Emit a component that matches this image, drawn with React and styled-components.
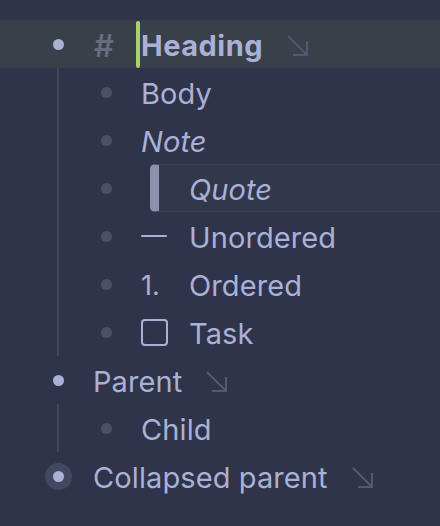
import React from "react";
import styled, { createGlobalStyle, css } from "styled-components";

const GlobalStyle = createGlobalStyle`
  html, body {
    margin: 0;
    padding: 0;
    background: #30344a;
  }
  body {
    font-family: Inter, "Noto Sans", sans-serif;
    color: #a9b1d6;
    -webkit-font-smoothing: antialiased;
  }
`;

const Outline = styled.div`
  width: 440px;
  height: 526px;
  overflow: hidden;
  padding-top: 20px;
  box-sizing: border-box;
  background: #30344a;
`;

const Row = styled.div`
  position: relative;
  display: flex;
  align-items: center;
  height: 48px;
  padding-left: ${(p) => 40 + p.level * 48}px;
  font-size: 29px;
  letter-spacing: 0.1px;
  ${(p) =>
    p.active &&
    css`
      background: #3a4049;
    `}
`;

const BulletCell = styled.div`
  width: 36px;
  flex: none;
  display: flex;
  align-items: center;
  justify-content: center;
  margin-right: 17px;
`;

const Dot = styled.span`
  position: relative;
  width: 11px;
  height: 11px;
  border-radius: 50%;
  background: ${(p) => (p.dim ? "#4a5068" : "#a9b1d6")};
  ${(p) =>
    p.collapsed &&
    css`
      box-shadow: 0 0 0 8px rgba(169, 177, 214, 0.16);
    `}
`;

const Prefix = styled.div`
  width: 48px;
  flex: none;
  display: flex;
  align-items: center;
  height: 100%;
  box-sizing: border-box;
`;

const Hash = styled.span`
  color: #676d80;
  font-size: 31px;
  font-weight: 600;
  margin-left: 1px;
  padding-top: 3px;
`;

const Caret = styled.span`
  width: 4px;
  height: 47px;
  background: #a9d46c;
  border-radius: 2px;
  margin-left: -5px;
  margin-right: 1px;
  flex: none;
`;

const Text = styled.span`
  font-weight: ${(p) => (p.bold ? 700 : 400)};
  font-style: ${(p) => (p.italic ? "italic" : "normal")};
  letter-spacing: ${(p) => (p.bold ? "0.5px" : "0.1px")};
  white-space: nowrap;
  padding-top: 3px;
`;

const Dash = styled.span`
  width: 26px;
  height: 2.5px;
  background: #a9b1d6;
  border-radius: 1px;
`;

const Num = styled.span`
  font-size: 27px;
  padding-top: 3px;
`;

const Box = styled.span`
  width: 27px;
  height: 27px;
  box-sizing: border-box;
  border: 2px solid #a9b1d6;
  border-radius: 4px;
`;

const QuoteBlock = styled.div`
  flex: 1;
  align-self: stretch;
  display: flex;
  align-items: center;
  margin-left: 9px;
  background: rgba(255, 255, 255, 0.015);
  border-top: 1px solid rgba(255, 255, 255, 0.05);
  border-bottom: 1px solid rgba(255, 255, 255, 0.05);
  border-left: 9px solid #8c92ad;
  border-radius: 5px 0 0 5px;
  padding-left: 30px;
`;

const Guide = styled.div`
  position: relative;
  &::before {
    content: "";
    position: absolute;
    left: 57px;
    top: 0;
    bottom: 0;
    width: 1.5px;
    background: #434860;
  }
`;

const Jump = styled.svg`
  width: 24px;
  height: 24px;
  margin-left: 23px;
  margin-top: 3px;
  flex: none;
  color: #525a72;
`;

function JumpArrow() {
  return (
    <Jump viewBox="0 0 24 24" fill="none" stroke="currentColor" strokeWidth="2">
      <path d="M2 2 L21 21" />
      <path d="M21 7 V21 H7" />
    </Jump>
  );
}

function Item({ level = 0, dim, collapsed, active, children }) {
  return (
    <Row level={level} active={active}>
      <BulletCell>
        <Dot dim={dim} collapsed={collapsed} />
      </BulletCell>
      {children}
    </Row>
  );
}

export default function App() {
  return (
    <>
      <GlobalStyle />
      <Outline>
        <Item active>
          <Prefix>
            <Hash>#</Hash>
          </Prefix>
          <Caret />
          <Text bold>Heading</Text>
          <JumpArrow />
        </Item>
        <Guide>
          <Item level={1} dim>
            <Text>Body</Text>
          </Item>
          <Item level={1} dim>
            <Text italic>Note</Text>
          </Item>
          <Item level={1} dim>
            <QuoteBlock>
              <Text italic>Quote</Text>
            </QuoteBlock>
          </Item>
          <Item level={1} dim>
            <Prefix>
              <Dash />
            </Prefix>
            <Text>Unordered</Text>
          </Item>
          <Item level={1} dim>
            <Prefix>
              <Num>1.</Num>
            </Prefix>
            <Text>Ordered</Text>
          </Item>
          <Item level={1} dim>
            <Prefix>
              <Box />
            </Prefix>
            <Text>Task</Text>
          </Item>
        </Guide>
        <Item>
          <Text>Parent</Text>
          <JumpArrow />
        </Item>
        <Guide>
          <Item level={1} dim>
            <Text>Child</Text>
          </Item>
        </Guide>
        <Item collapsed>
          <Text>Collapsed parent</Text>
          <JumpArrow />
        </Item>
      </Outline>
    </>
  );
}
